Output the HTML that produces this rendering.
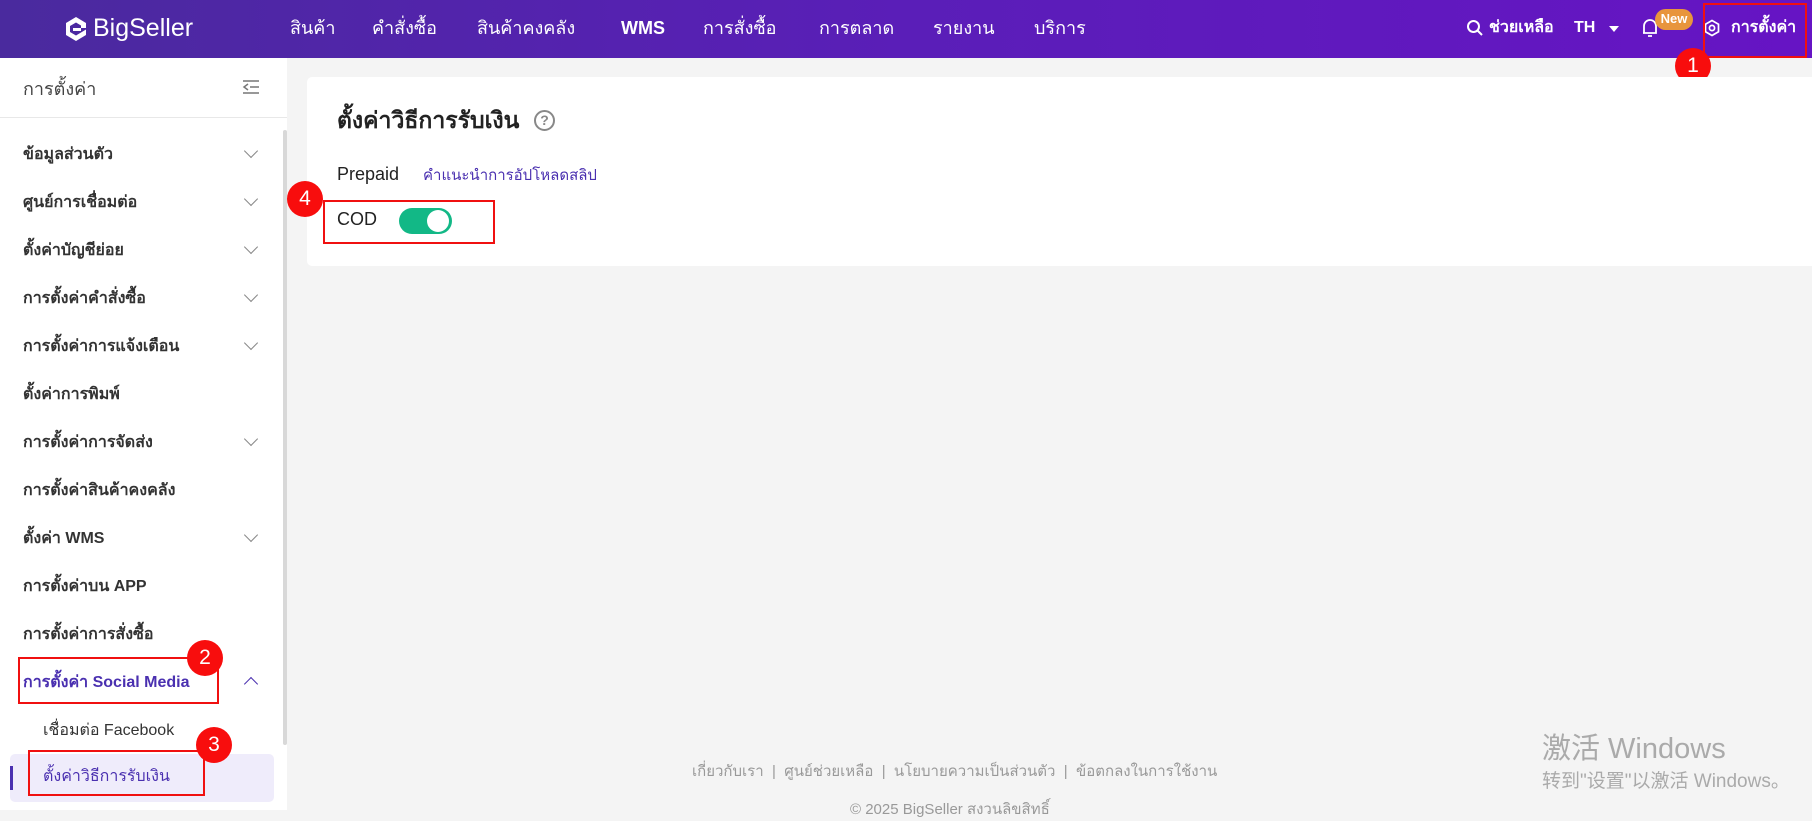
<!DOCTYPE html><html><head><meta charset="utf-8"><style>
*{box-sizing:border-box;margin:0;padding:0}
body{width:1812px;height:810px;overflow:hidden;background:#f4f4f4;font-family:"Liberation Sans","Noto Sans CJK SC",sans-serif;position:relative;color:#222}
.a{position:absolute;white-space:nowrap}
.hdr{position:absolute;left:0;top:0;width:1812px;height:58px;background:linear-gradient(90deg,#4a2a9e,#5a1eb8 50%,#6614c4)}
.nav{color:#fff;font-size:18px;top:13px}
.side{position:absolute;left:0;top:58px;width:287px;height:752px;background:#fff}
.mi{left:23px;font-size:16px;font-weight:bold;color:#333}
.chev{left:246px;width:10px;height:10px;border-right:1.6px solid #888;border-bottom:1.6px solid #888;transform:rotate(45deg)}
.red{position:absolute;border:2.5px solid #f01010}
.num{position:absolute;width:36px;height:36px;border-radius:50%;background:#f80d0d;color:#fff;font-size:21px;text-align:center;line-height:36px}
.ft{color:#999;font-size:15px}
</style></head><body>
<div class="hdr"></div>
<svg class="a" style="left:64px;top:15px" width="24" height="28" viewBox="0 0 24 28"><path d="M12 2 L22 8 V13 H17 V10.5 L12 7.5 L6 11 V17 L12 20.5 L22 14.5 V20 L12 26 L2 20 V8 Z" fill="#fff"/><path d="M9 13 h8 v3 h-8z" fill="#fff"/></svg>
<div class="a" style="left:93px;top:14px;color:#fff;font-size:25px">BigSeller</div>
<div class="a nav" style="left:290px">สินค้า</div>
<div class="a nav" style="left:372px">คำสั่งซื้อ</div>
<div class="a nav" style="left:477px">สินค้าคงคลัง</div>
<div class="a nav" style="left:621px;top:18px;font-weight:bold">WMS</div>
<div class="a nav" style="left:703px">การสั่งซื้อ</div>
<div class="a nav" style="left:819px">การตลาด</div>
<div class="a nav" style="left:933px">รายงาน</div>
<div class="a nav" style="left:1034px">บริการ</div>
<svg class="a" style="left:1466px;top:19px" width="18" height="18" viewBox="0 0 18 18"><circle cx="7.5" cy="7.5" r="5.5" fill="none" stroke="#fff" stroke-width="2"/><path d="M11.5 11.5 L16 16" stroke="#fff" stroke-width="2"/></svg>
<div class="a" style="left:1489px;top:15px;color:#fff;font-size:16px;font-weight:bold">ช่วยเหลือ</div>
<div class="a" style="left:1574px;top:19px;color:#fff;font-size:16px;font-weight:bold">TH</div>
<div class="a" style="left:1609px;top:26px;border:5px solid transparent;border-top:6px solid #fff"></div>
<svg class="a" style="left:1641px;top:17px" width="18" height="22" viewBox="0 0 18 22"><path d="M3 16 V9 a6 6 0 0 1 12 0 V16 H2 M7 19 h4" fill="none" stroke="#fff" stroke-width="1.8"/></svg>
<div class="a" style="left:1655px;top:9px;width:38px;height:21px;border-radius:11px;background:#e8953c;color:#fff;font-size:13px;font-weight:bold;text-align:center;line-height:20px">New</div>
<svg class="a" style="left:1703px;top:19px" width="18" height="18" viewBox="0 0 18 18"><path d="M9 1.5 L15.5 5.2 V12.8 L9 16.5 L2.5 12.8 V5.2 Z" fill="none" stroke="#fff" stroke-width="1.7"/><circle cx="9" cy="9" r="2.6" fill="none" stroke="#fff" stroke-width="1.7"/></svg>
<div class="a" style="left:1731px;top:15px;color:#fff;font-size:16px;font-weight:bold">การตั้งค่า</div>
<div class="red" style="left:1703px;top:3px;width:104px;height:55px"></div>
<div class="num" style="left:1675px;top:48px">1</div>

<div class="side"></div>
<div class="a" style="left:23px;top:74px;font-size:18px;color:#444">การตั้งค่า</div>
<svg class="a" style="left:242px;top:79px" width="18" height="16" viewBox="0 0 18 16"><path d="M1 2h16M8 8h9M1 14h16M6 5 L2 8 L6 11" fill="none" stroke="#777" stroke-width="1.5"/></svg>
<div class="a" style="left:0;top:117px;width:287px;height:1px;background:#e8e8e8"></div>
<div class="a" style="left:283px;top:130px;width:4px;height:615px;background:#d8d8d8;border-radius:2px"></div>
<div class="a mi" style="top:142px">ข้อมูลส่วนตัว</div><div class="a chev" style="top:146px"></div>
<div class="a mi" style="top:190px">ศูนย์การเชื่อมต่อ</div><div class="a chev" style="top:194px"></div>
<div class="a mi" style="top:238px">ตั้งค่าบัญชีย่อย</div><div class="a chev" style="top:242px"></div>
<div class="a mi" style="top:286px">การตั้งค่าคำสั่งซื้อ</div><div class="a chev" style="top:290px"></div>
<div class="a mi" style="top:334px">การตั้งค่าการแจ้งเตือน</div><div class="a chev" style="top:338px"></div>
<div class="a mi" style="top:382px">ตั้งค่าการพิมพ์</div>
<div class="a mi" style="top:430px">การตั้งค่าการจัดส่ง</div><div class="a chev" style="top:434px"></div>
<div class="a mi" style="top:478px">การตั้งค่าสินค้าคงคลัง</div>
<div class="a mi" style="top:526px">ตั้งค่า WMS</div><div class="a chev" style="top:530px"></div>
<div class="a mi" style="top:574px">การตั้งค่าบน APP</div>
<div class="a mi" style="top:622px">การตั้งค่าการสั่งซื้อ</div>
<div class="a mi" style="top:670px;color:#4a30b0">การตั้งค่า Social Media</div><div class="a chev" style="top:679px;transform:rotate(225deg);border-color:#4a30b0"></div>
<div class="a" style="left:43px;top:718px;font-size:16px;color:#333">เชื่อมต่อ Facebook</div>
<div class="a" style="left:10px;top:754px;width:264px;height:48px;background:#efecfb;border-radius:5px"></div>
<div class="a" style="left:10px;top:766px;width:3px;height:24px;background:#4a30b0"></div>
<div class="a" style="left:43px;top:764px;font-size:16px;color:#4a30b0">ตั้งค่าวิธีการรับเงิน</div>
<div class="red" style="left:18px;top:657px;width:201px;height:47px"></div>
<div class="num" style="left:187px;top:640px">2</div>
<div class="red" style="left:28px;top:750px;width:177px;height:46px"></div>
<div class="num" style="left:196px;top:727px">3</div>

<div class="a" style="left:307px;top:77px;width:1510px;height:189px;background:#fff;border-radius:5px"></div>
<div class="a" style="left:337px;top:103px;font-size:23px;font-weight:bold;color:#222">ตั้งค่าวิธีการรับเงิน</div>
<div class="a" style="left:534px;top:110px;width:21px;height:21px;border:2.5px solid #888;border-radius:50%;color:#888;font-size:14px;font-weight:bold;text-align:center;line-height:17px">?</div>
<div class="a" style="left:337px;top:164px;font-size:18px;color:#222">Prepaid</div>
<div class="a" style="left:423px;top:163px;font-size:15px;color:#4a30b0">คำแนะนำการอัปโหลดสลิป</div>
<div class="a" style="left:337px;top:209px;font-size:18px;color:#222">COD</div>
<div class="a" style="left:399px;top:208px;width:53px;height:26px;border-radius:13px;background:#12b886"></div>
<div class="a" style="left:427px;top:210px;width:22px;height:22px;border-radius:50%;background:#fff"></div>
<div class="red" style="left:323px;top:200px;width:172px;height:44px"></div>
<div class="num" style="left:287px;top:181px">4</div>

<div class="a ft" style="left:692px;top:759px">เกี่ยวกับเรา &nbsp;|&nbsp; ศูนย์ช่วยเหลือ &nbsp;|&nbsp; นโยบายความเป็นส่วนตัว &nbsp;|&nbsp; ข้อตกลงในการใช้งาน</div>
<div class="a ft" style="left:850px;top:797px">© 2025 BigSeller สงวนลิขสิทธิ์</div>
<div class="a" style="left:1542px;top:725px;font-size:29px;color:#aaa">激活 Windows</div>
<div class="a" style="left:1542px;top:766px;font-size:19px;color:#aaa">转到"设置"以激活 Windows。</div>
</body></html>
